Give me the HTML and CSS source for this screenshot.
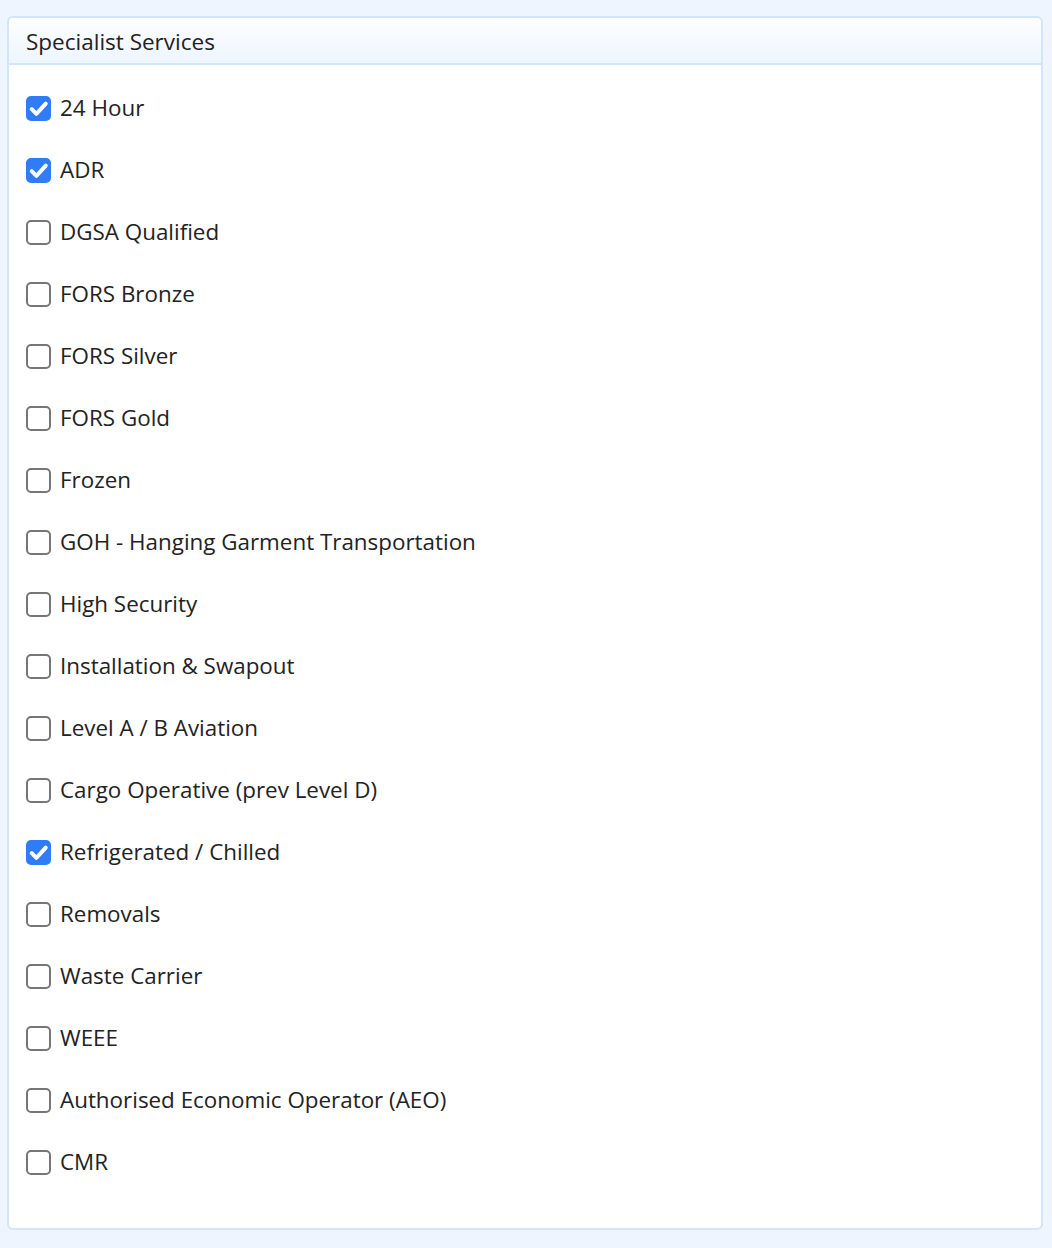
FILE: index.html
```html
<!DOCTYPE html>
<html lang="en">
<head>
    <meta charset="UTF-8">
    <meta name="viewport" content="width=device-width, initial-scale=1.0">
    <title>Specialist Services</title>
    <link rel="stylesheet" href="styles.css">
</head>
<body>

<div class="panel">
    <div class="panel-heading">Specialist Services</div>
    <div class="panel-body">
        <label class="check-row"><input type="checkbox" checked><span>24 Hour</span></label>
        <label class="check-row"><input type="checkbox" checked><span>ADR</span></label>
        <label class="check-row"><input type="checkbox"><span>DGSA Qualified</span></label>
        <label class="check-row"><input type="checkbox"><span>FORS Bronze</span></label>
        <label class="check-row"><input type="checkbox"><span>FORS Silver</span></label>
        <label class="check-row"><input type="checkbox"><span>FORS Gold</span></label>
        <label class="check-row"><input type="checkbox"><span>Frozen</span></label>
        <label class="check-row"><input type="checkbox"><span>GOH - Hanging Garment Transportation</span></label>
        <label class="check-row"><input type="checkbox"><span>High Security</span></label>
        <label class="check-row"><input type="checkbox"><span>Installation &amp; Swapout</span></label>
        <label class="check-row"><input type="checkbox"><span>Level A / B Aviation</span></label>
        <label class="check-row"><input type="checkbox"><span>Cargo Operative (prev Level D)</span></label>
        <label class="check-row"><input type="checkbox" checked><span>Refrigerated / Chilled</span></label>
        <label class="check-row"><input type="checkbox"><span>Removals</span></label>
        <label class="check-row"><input type="checkbox"><span>Waste Carrier</span></label>
        <label class="check-row"><input type="checkbox"><span>WEEE</span></label>
        <label class="check-row"><input type="checkbox"><span>Authorised Economic Operator (AEO)</span></label>
        <label class="check-row"><input type="checkbox"><span>CMR</span></label>
    </div>
</div>

</body>
</html>
```

FILE: styles.css
```css
body {
    margin: 0;
    padding: 16px 9px 16px 7px;
    background: #eef5fe;
    font-family: "Open Sans", "Lato", sans-serif;
    color: #222;
}

.panel {
    background: #fff;
    border: 2px solid #d3e5fa;
    border-radius: 6px;
}

.panel-heading {
    height: 47px;
    box-sizing: border-box;
    padding: 9px 17px 0;
    font-size: 22.5px;
    line-height: 1.3;
    background: linear-gradient(to bottom, #fdfeff, #eef5fe);
    border-bottom: 2px solid #d3e5fa;
    border-radius: 6px 6px 0 0;
}

.panel-body {
    padding: 12px 17px 35px;
}

.check-row {
    display: flex;
    align-items: center;
    height: 62px;
    font-size: 22.4px;
    cursor: pointer;
}

.check-row span {
    margin-top: -1px;
}

.check-row input {
    appearance: none;
    -webkit-appearance: none;
    width: 25px;
    height: 25px;
    margin: 0 9px 0 0;
    box-sizing: border-box;
    border: 2px solid #767676;
    border-radius: 5px;
    background: #fff;
    flex-shrink: 0;
}

.check-row input:checked {
    border-color: #2f7cf6;
    background: #2f7cf6 url("data:image/svg+xml,%3Csvg xmlns='http://www.w3.org/2000/svg' viewBox='0 0 24 24'%3E%3Cpath d='M4.5 12.5l5 5L19.5 6.5' fill='none' stroke='%23fff' stroke-width='4.2' stroke-linecap='round' stroke-linejoin='round'/%3E%3C/svg%3E") center / 22px no-repeat;
}
```
